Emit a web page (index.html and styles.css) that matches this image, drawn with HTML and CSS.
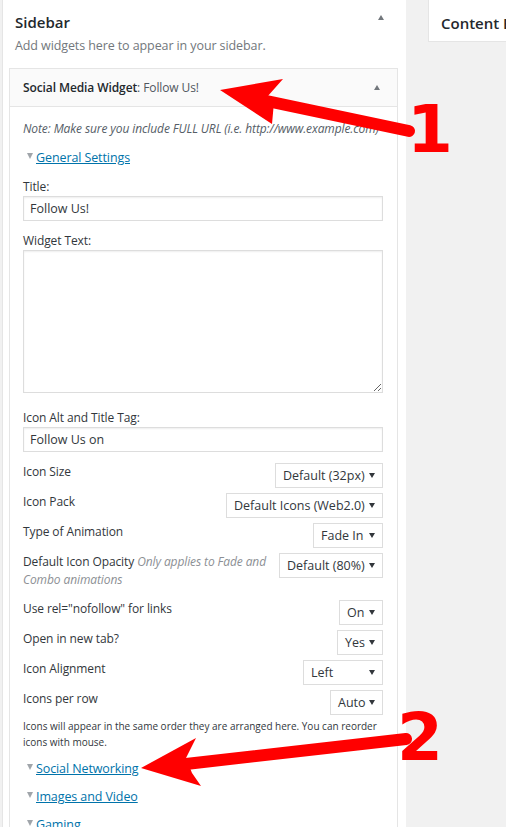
FILE: index.html
```html
<!DOCTYPE html>
<html>
<head>
<meta charset="utf-8">
<link rel="stylesheet" href="styles.css">
</head>
<body>
<div class="page">
  <section class="sidebar-panel">
    <div class="panel-head">
      <h2 class="panel-title">Sidebar</h2>
      <span class="toggle toggle-panel"></span>
    </div>
    <p class="panel-desc">Add widgets here to appear in your sidebar.</p>

    <div class="widget">
      <div class="widget-top">
        <h3 class="widget-title">Social Media Widget<span class="in-title">: Follow Us!</span></h3>
        <span class="toggle"></span>
      </div>
      <div class="widget-inside">
        <p class="note">Note: Make sure you include FULL URL (i.e. http://www.example.com)</p>
        <p class="section-link"><span class="tri"></span><a href="#">General Settings</a></p>

        <label class="field-label">Title:</label>
        <div class="text-input">Follow Us!</div>

        <label class="field-label spaced">Widget Text:</label>
        <textarea class="textarea"></textarea>

        <label class="field-label spaced-lg">Icon Alt and Title Tag:</label>
        <div class="text-input">Follow Us on</div>

        <div class="rows">
          <div class="row">
            <span class="row-label">Icon Size</span>
            <span class="select w-size"><span>Default (32px)</span><span class="caret"></span></span>
          </div>
          <div class="row">
            <span class="row-label">Icon Pack</span>
            <span class="select w-pack"><span>Default Icons (Web2.0)</span><span class="caret"></span></span>
          </div>
          <div class="row">
            <span class="row-label">Type of Animation</span>
            <span class="select w-anim"><span>Fade In</span><span class="caret"></span></span>
          </div>
          <div class="row row-tall">
            <span class="row-label narrow">Default Icon Opacity <em class="hint">Only applies to Fade and Combo animations</em></span>
            <span class="select w-opacity"><span>Default (80%)</span><span class="caret"></span></span>
          </div>
          <div class="row">
            <span class="row-label">Use rel="nofollow" for links</span>
            <span class="select w-on"><span>On</span><span class="caret"></span></span>
          </div>
          <div class="row">
            <span class="row-label">Open in new tab?</span>
            <span class="select w-yes"><span>Yes</span><span class="caret"></span></span>
          </div>
          <div class="row">
            <span class="row-label">Icon Alignment</span>
            <span class="select w-left"><span>Left</span><span class="caret"></span></span>
          </div>
          <div class="row">
            <span class="row-label">Icons per row</span>
            <span class="select w-auto"><span>Auto</span><span class="caret"></span></span>
          </div>
        </div>

        <p class="small-note">Icons will appear in the same order they are arranged here. You can reorder icons with mouse.</p>

        <p class="section-link section-gap"><span class="tri"></span><a href="#">Social Networking</a></p>
        <p class="section-link section-gap"><span class="tri"></span><a href="#">Images and Video</a></p>
        <p class="section-link section-gap"><span class="tri"></span><a href="#">Gaming</a></p>
      </div>
    </div>
  </section>

  <section class="content-panel">
    <h2 class="panel-title">Content Bottom 1</h2>
  </section>
</div>

<svg class="annotations" width="506" height="827" viewBox="0 0 506 827">
  <polygon points="220,90 283,79 267,97 274,102 272,124" fill="#ff0000"/>
  <line x1="262" y1="100" x2="409" y2="131" stroke="#ff0000" stroke-width="12" stroke-linecap="round"/>
  <polygon points="141,768 196,738 186,758 192,773 201,786" fill="#ff0000"/>
  <line x1="186" y1="764" x2="406" y2="739" stroke="#ff0000" stroke-width="12" stroke-linecap="round"/>
</svg>
<span class="num num-1">1</span>
<span class="num num-2">2</span>
</body>
</html>
```

FILE: styles.css
```css
html, body {
  margin: 0;
  padding: 0;
}
body {
  background: #f1f1f1;
  font-family: "Open Sans", "Noto Sans", sans-serif;
  font-size: 12px;
  letter-spacing: -0.1px;
  color: #32373c;
  width: 506px;
  height: 827px;
  overflow: hidden;
  position: relative;
}
.page {
  display: flex;
  align-items: flex-start;
}
.sidebar-panel {
  margin-left: 2px;
  width: 403px;
  height: 827px;
  background: #fff;
  border-left: 1px solid #e5e5e5;
  flex-shrink: 0;
}
.panel-head {
  display: flex;
  justify-content: space-between;
  align-items: flex-start;
  padding: 12px 22px 0 12px;
}
.panel-title {
  margin: 0;
  font-size: 15px;
  line-height: 20px;
  font-weight: 600;
  letter-spacing: 0;
  color: #23282d;
}
.toggle {
  width: 0;
  height: 0;
  border-left: 3.5px solid transparent;
  border-right: 3.5px solid transparent;
  border-bottom: 5px solid #72777c;
}
.toggle-panel {
  margin-top: 3px;
}
.panel-desc {
  margin: 5px 0 0 12px;
  font-size: 12.5px;
  line-height: 18px;
  color: #72777c;
}
.widget {
  margin: 13px 0 0 6px;
  width: 389px;
}
.widget-top {
  display: flex;
  align-items: center;
  justify-content: space-between;
  height: 39px;
  box-sizing: border-box;
  padding: 0 17px 0 13px;
  background: #fafafa;
  border: 1px solid #e5e5e5;
}
.widget-title {
  margin: 0;
  font-size: 12px;
  font-weight: 600;
  color: #23282d;
  line-height: 18px;
}
.in-title {
  font-weight: 400;
  color: #50575e;
}
.widget-inside {
  border: 1px solid #e5e5e5;
  border-top: none;
  padding: 13px 14px 0 13px;
  height: 760px;
  background: #fff;
}
.note {
  margin: 0;
  font-size: 12px;
  font-style: italic;
  line-height: 18px;
  color: #555d66;
  white-space: nowrap;
}
.section-link {
  margin: 11px 0 0 0;
  line-height: 18px;
  font-size: 12.5px;
  display: flex;
  align-items: center;
}
.section-gap {
  margin-top: 10px;
}
.tri {
  width: 0;
  height: 0;
  margin: 0 3px 5px 4px;
  border-left: 3px solid transparent;
  border-right: 3px solid transparent;
  border-top: 6px solid #a0a5aa;
}
.section-link a {
  color: #0073aa;
  text-decoration: underline;
}
.field-label {
  display: block;
  margin-top: 11px;
  line-height: 18px;
}
.spaced {
  margin-top: 11px;
}
.spaced-lg {
  margin-top: 16px;
}
.text-input {
  box-sizing: border-box;
  height: 25px;
  width: 360px;
  border: 1px solid #ddd;
  box-shadow: inset 0 1px 2px rgba(0,0,0,0.07);
  padding: 0 6px;
  font-size: 12.5px;
  letter-spacing: 0;
  line-height: 23px;
  color: #32373c;
}
.textarea {
  display: block;
  box-sizing: border-box;
  width: 360px;
  height: 143px;
  margin: 0;
  border: 1px solid #ddd;
  box-shadow: inset 0 1px 2px rgba(0,0,0,0.07);
  resize: vertical;
  font-family: inherit;
}
.rows {
  margin-top: 11px;
  width: 360px;
  display: flex;
  flex-direction: column;
  gap: 5px;
}
.row {
  display: flex;
  justify-content: space-between;
  align-items: flex-start;
}
.row-tall {
  margin-bottom: 6px;
}
.row-label {
  line-height: 18px;
}
.row-label.narrow {
  flex: 1;
  padding-right: 10px;
}
.hint {
  color: #8c8f94;
}
.select {
  box-sizing: border-box;
  height: 25px;
  display: flex;
  align-items: center;
  justify-content: space-between;
  border: 1px solid #ddd;
  padding: 0 7px 0 7px;
  background: #fff;
  color: #32373c;
  font-size: 12.5px;
  letter-spacing: 0;
  white-space: nowrap;
  flex-shrink: 0;
}
.caret {
  width: 0;
  height: 0;
  border-left: 3px solid transparent;
  border-right: 3px solid transparent;
  border-top: 5px solid #32373c;
}
.w-size { width: 108px; }
.w-pack { width: 157px; }
.w-anim { width: 70px; }
.w-opacity { width: 104px; }
.w-on { width: 44px; }
.w-yes { width: 46px; }
.w-left { width: 80px; }
.w-auto { width: 53px; }
.small-note {
  margin: 3px 0 0 0;
  font-size: 10px;
  letter-spacing: 0;
  line-height: 16px;
}
.content-panel {
  margin: -1px 0 0 22px;
  width: 120px;
  height: 43px;
  box-sizing: border-box;
  background: #fff;
  border: 1px solid #e5e5e5;
  padding: 13px 0 0 12px;
  white-space: nowrap;
  flex-shrink: 0;
}
.annotations {
  position: absolute;
  left: 0;
  top: 0;
  pointer-events: none;
}
.num {
  position: absolute;
  font-family: "DejaVu Sans", sans-serif;
  font-weight: 700;
  font-size: 66px;
  line-height: 1;
  letter-spacing: 0;
  color: #ff0000;
}
.num-1 { left: 407px; top: 97px; }
.num-2 { left: 397px; top: 705px; }
```
